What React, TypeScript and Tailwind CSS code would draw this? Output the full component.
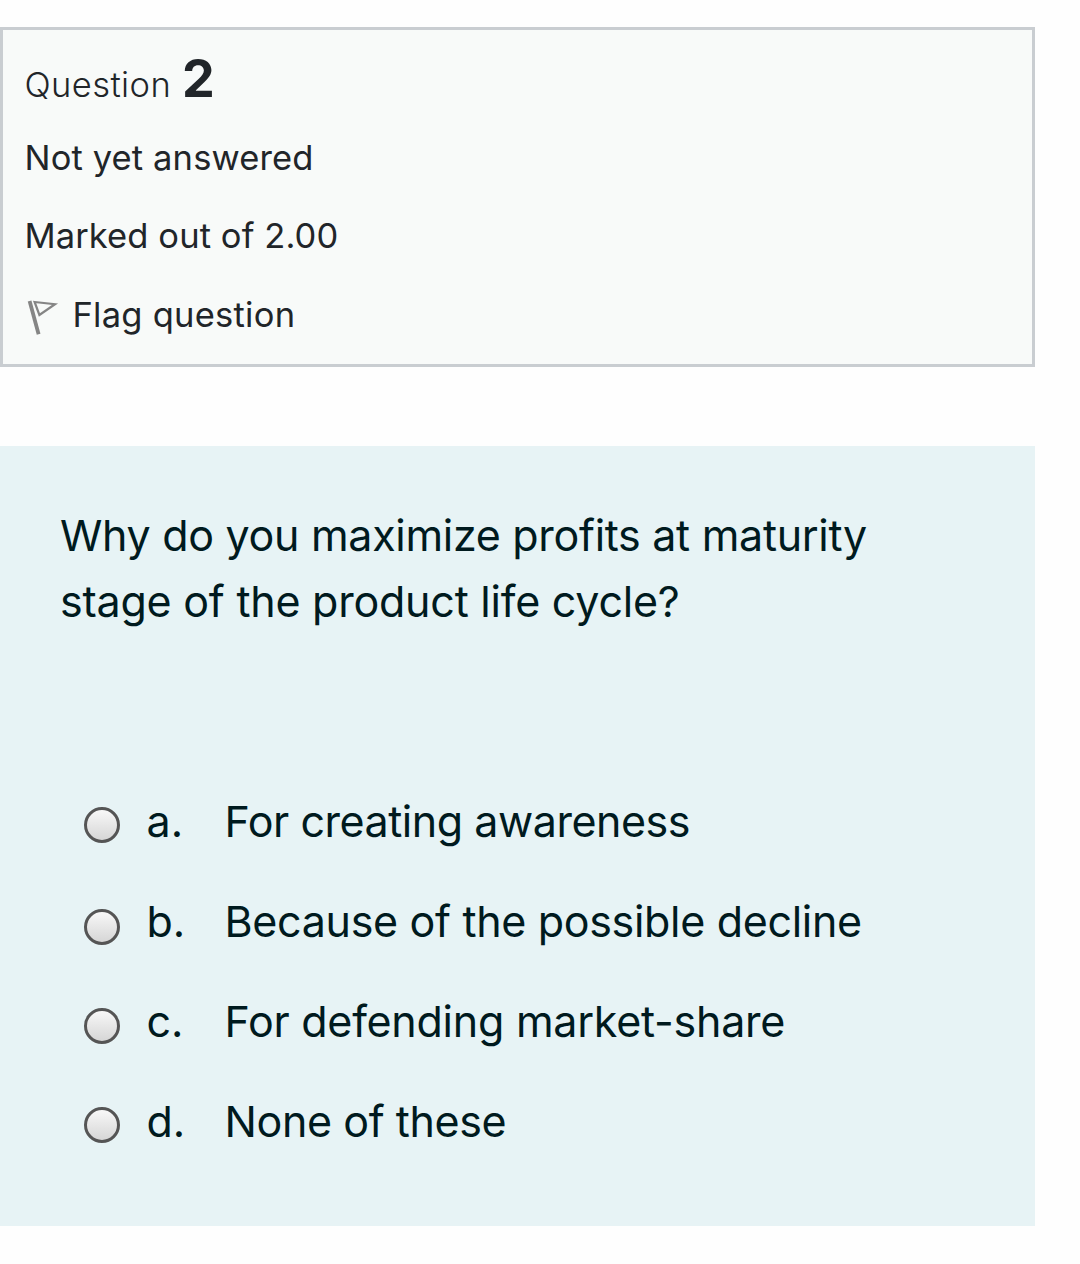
const answers = [
    { letter: "a.", text: "For creating awareness", track: "tracking-[-0.46px]", radio: "mt-[7px]" },
    { letter: "b.", text: "Because of the possible decline", track: "tracking-[-0.32px]", radio: "mt-[11px]" },
    { letter: "c.", text: "For defending market-share", track: "tracking-[-0.25px]", radio: "mt-[9px]" },
    { letter: "d.", text: "None of these", track: "tracking-[-0.4px]", radio: "mt-[7px]" },
];

function FlagIcon() {
    return (
        <svg className="w-9 h-9 shrink-0 overflow-visible" viewBox="0 0 36 36" fill="none" stroke="#858585">
            <path d="M4.6 4 L13.6 37.3" strokeWidth="3.8" />
            <path d="M9.6 5 L30 7.2 L14.4 18 Z" strokeWidth="2.2" />
        </svg>
    );
}

export default function App() {
    return (
        <main className="w-[1080px] h-[1264px] bg-[#fefefe] pt-[27px] font-['Inter',sans-serif] overflow-hidden">
            <section className="w-[1035px] h-[340px] border-[3px] border-[#c9cdd1] bg-[#f8faf9] pl-[21.5px] pt-[17px] text-[#212529] text-[34.5px]">
                <h3 className="flex items-baseline h-[64px] leading-[64px] font-light tracking-[0.4px]">
                    Question
                    <span className="text-[52px] font-bold ml-[11px] tracking-normal">2</span>
                </h3>
                <p className="h-[40px] leading-[40px] mt-[27px] tracking-[0.14px]">Not yet answered</p>
                <p className="h-[40px] leading-[40px] mt-[38px] tracking-[0.1px]">Marked out of 2.00</p>
                <div className="flex items-center h-[40px] mt-[39px]">
                    <FlagIcon />
                    <span className="ml-3 tracking-[0.25px]">Flag question</span>
                </div>
            </section>

            <section className="w-[1035px] h-[780px] mt-[79px] bg-[#e7f3f5] text-[#001a1e] text-[43px] pt-[56px] pl-[60px]">
                <p className="leading-[66px] tracking-[-0.3px] whitespace-nowrap">
                    Why do you maximize profits at maturity
                    <br />
                    <span className="tracking-[-0.23px]">stage of the product life cycle?</span>
                </p>
                <div className="mt-[137px] pl-[24px]">
                    {answers.map((item) => (
                        <label key={item.letter} className="flex items-center h-[100px] whitespace-nowrap">
                            <span
                                className={`w-9 h-9 rounded-full border-[3px] border-[#555] bg-gradient-to-b from-[#f8f8f8] to-[#d6d6d6] ${item.radio}`}
                            />
                            <span className="w-[78px] ml-[26.5px]">{item.letter}</span>
                            <span className={item.track}>{item.text}</span>
                        </label>
                    ))}
                </div>
            </section>
        </main>
    );
}
